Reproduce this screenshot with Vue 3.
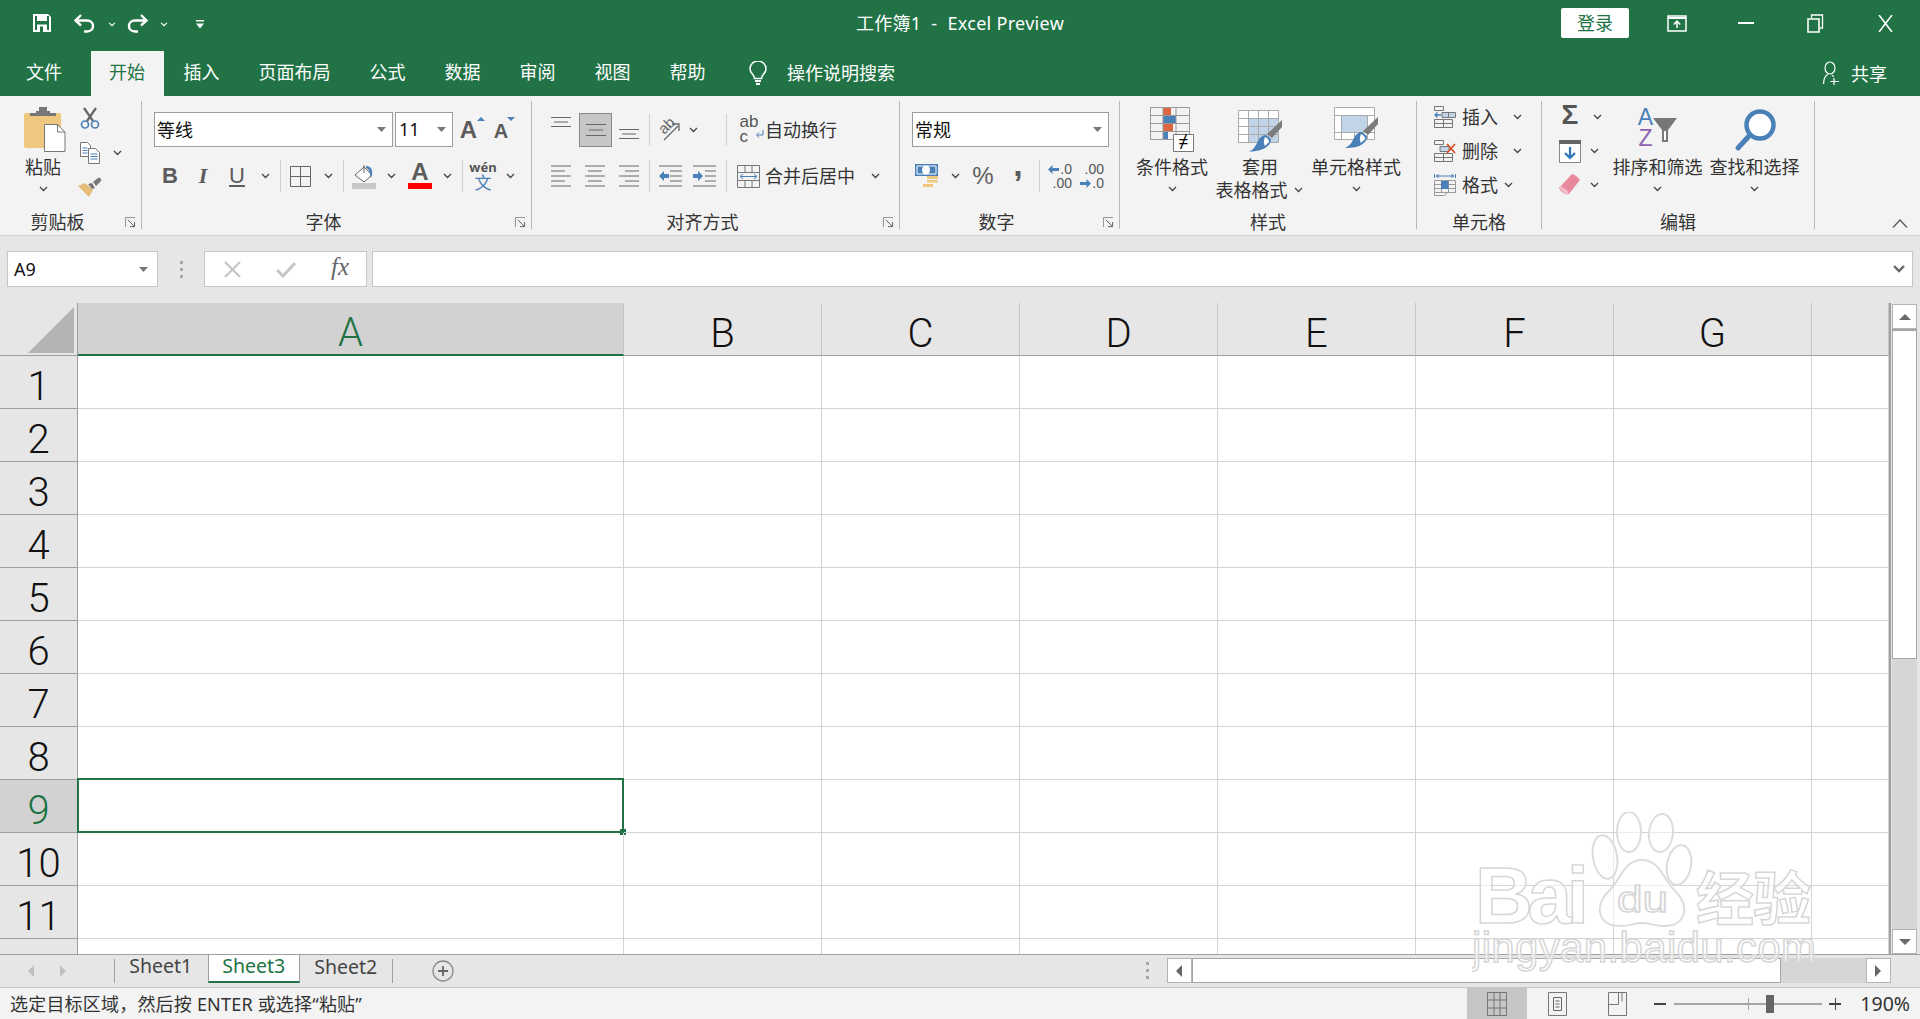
<template>
  <div class="excel">
    <!-- 图标 sprite -->
    <svg class="sprite" aria-hidden="true">
      <symbol id="chev" viewBox="0 0 9 6"><path d="M1 1l3.5 3.5L8 1" fill="none" stroke="#444" stroke-width="1.3" /></symbol>
      <symbol id="launcher" viewBox="0 0 12 12">
        <path d="M.5 11V.5H11" fill="none" stroke="#8a8a8a" />
        <path d="M3 3l7 7M10.5 5.5v5h-5" fill="none" stroke="#555" />
      </symbol>
      <symbol id="drop" viewBox="0 0 9 5"><path d="M0 0h9L4.500 5z" fill="#777" /></symbol>
    </svg>

    <!-- 标题栏 -->
    <header class="titlebar">
      <div class="qat">
        <svg class="i-save" width="20" height="20" viewBox="0 0 20 20">
          <path d="M1 1h15l3 3v15H1z" fill="#fff" />
          <path d="M3 3h14v14H3z" fill="#217346" />
          <path d="M5 1h10v7H5z" fill="#fff" />
          <path d="M5 11.500h10V19H5z" fill="#fff" />
          <path d="M8 13.500h3V19H8z" fill="#217346" />
        </svg>
        <svg class="i-undo" width="24" height="20" viewBox="0 0 24 20">
          <path d="M8 2L2.500 7.500 8 12.500M3 7.500h11c8 0 8 11 0 11h-3" fill="none" stroke="#fff" stroke-width="2.400" />
        </svg>
        <svg class="tb-chev" width="8" height="5"><use href="#chev" class="white" /></svg>
        <svg class="i-redo" width="24" height="20" viewBox="0 0 24 20">
          <path d="M16 2l5.500 5.500L16 12.500M21 7.500H10c-8 0-8 11 0 11h3" fill="none" stroke="#fff" stroke-width="2.400" />
        </svg>
        <svg class="tb-chev" width="8" height="5"><use href="#chev" /></svg>
        <svg class="i-more" width="8" height="9" viewBox="0 0 8 9"><path d="M0 0h8v1.500H0zM0 3.500h8L4 8.500z" fill="#fff" /></svg>
      </div>
      <div class="doc-title">工作簿1 &nbsp;-&nbsp; Excel Preview</div>
      <div class="win-ctl">
        <button class="login">登录</button>
        <span class="ctl">
          <svg width="20" height="17" viewBox="0 0 20 17">
            <path d="M1 1h18v15H1z" fill="none" stroke="#fff" stroke-width="1.500" />
            <path d="M1 3h18" stroke="#fff" stroke-width="2" />
            <path d="M10 13V6.500M6.800 9.500L10 6.200l3.200 3.300" fill="none" stroke="#fff" stroke-width="1.500" />
          </svg>
        </span>
        <span class="ctl"><svg width="16" height="2"><path d="M0 1h16" stroke="#fff" stroke-width="2" /></svg></span>
        <span class="ctl">
          <svg width="17" height="19" viewBox="0 0 17 19">
            <path d="M1 5h11v13H1z" fill="none" stroke="#fff" stroke-width="1.600" />
            <path d="M4.500 4V1h11v13H13" fill="none" stroke="#fff" stroke-width="1.300" />
          </svg>
        </span>
        <span class="ctl"><svg width="15" height="17" viewBox="0 0 15 17"><path d="M1 0l13 17M14 0L1 17" stroke="#fff" stroke-width="1.600" /></svg></span>
      </div>
    </header>

    <!-- 选项卡 -->
    <nav class="tabs">
      <span v-for="tab in ribbonTabs" :key="tab" class="tab" :class="{ active: tab === '开始', file: tab === '文件' }">{{ tab }}</span>
      <svg class="bulb" width="18" height="25" viewBox="0 0 18 25">
        <path d="M5.500 17.500c0-4-4.500-5-4.500-9.500a8 8 0 0 1 16 0c0 4.500-4.500 5.500-4.500 9.500z" fill="none" stroke="#fff" stroke-width="1.500" />
        <path d="M6 20h6M7 23h4" stroke="#fff" stroke-width="2" />
      </svg>
      <span class="tell">操作说明搜索</span>
      <span class="share">
        <svg width="16" height="24" viewBox="0 0 16 24">
          <ellipse cx="7" cy="7" rx="5" ry="6" fill="none" stroke="#fff" stroke-width="1.200" />
          <path d="M.6 23c0-5 1.500-8 4-9.500M9 14.500l2 1M11 17v7M7.500 20.500H16" fill="none" stroke="#fff" stroke-width="1.200" />
        </svg>
        <span>共享</span>
      </span>
    </nav>

    <!-- 功能区 -->
    <section class="ribbon">
      <!-- 剪贴板 -->
      <div class="group g-clip has-launcher">
        <div class="body">
          <div class="big paste">
            <svg class="paste-icon" width="42" height="45" viewBox="0 0 42 45">
              <path d="M2 6h34a2 2 0 0 1 1 2v33H2a2 2 0 0 1-2-2V8a2 2 0 0 1 2-2z" fill="#edc87e" />
              <path d="M6 6h6V4h3V0h8v4h3v2h6v3H6z" fill="#777" />
              <path d="M20.500 17.500h13l7.500 7.500v19.500H20.500z" fill="#fff" stroke="#777" />
              <path d="M33.500 17.500V25H41" fill="none" stroke="#777" />
            </svg>
            <span class="big-text">粘贴</span>
            <svg class="chev" width="9" height="6"><use href="#chev" /></svg>
          </div>
          <div class="stack clip-stack">
            <div class="row-item">
              <svg class="clip-icon" width="20" height="22" viewBox="0 0 20 22">
                <path d="M4 1l9 13M16 1L7 14" stroke="#666" stroke-width="2.200" />
                <circle cx="5" cy="17.500" r="3.500" fill="none" stroke="#4a80b8" stroke-width="1.700" />
                <circle cx="15" cy="17.500" r="3.500" fill="none" stroke="#4a80b8" stroke-width="1.700" />
              </svg>
            </div>
            <div class="row-item">
              <svg class="clip-icon" width="20" height="22" viewBox="0 0 20 22">
                <path d="M.5.500h7l3 3v11H.5z" fill="#fff" stroke="#777" />
                <path d="M2.500 6h5M2.500 8.500h5M2.500 11h5" stroke="#4a80b8" />
                <path d="M8.500 6.500h7l4 4v11h-11z" fill="#fff" stroke="#777" />
                <path d="M10.500 12h7M10.500 14.500h7M10.500 17h7" stroke="#4a80b8" />
              </svg>
              <svg class="copy-chev" width="9" height="6"><use href="#chev" /></svg>
            </div>
            <div class="row-item">
              <svg class="clip-icon" width="24" height="21" viewBox="0 0 24 21">
                <path d="M0 9l7-3 8 7-4 7z" fill="#e5bd7a" />
                <path d="M10 7l4 5 3-1-3-5zM15 5l3 4 5-5c1-2-1-4-3-3z" fill="#777" />
              </svg>
            </div>
          </div>
        </div>
        <div class="group-label">剪贴板</div>
        <svg class="launcher" width="11" height="11"><use href="#launcher" /></svg>
      </div>

      <!-- 字体 -->
      <div class="group g-font has-launcher">
        <div class="body tworow">
          <div class="rb-row top">
            <div class="combo font-name"><span>等线</span><svg width="9" height="5"><use href="#drop" /></svg></div>
            <div class="combo font-size"><span>11</span><svg width="9" height="5"><use href="#drop" /></svg></div>
            <span class="slot grow"><b class="a-big">A</b><i class="tri up"></i></span>
            <span class="slot shrink"><b class="a-small">A</b><i class="tri down"></i></span>
          </div>
          <div class="rb-row bottom">
            <span class="slot w32 fmt bold">B</span>
            <span class="slot w34 fmt ital">I</span>
            <span class="slot w34 fmt under">U</span>
            <span class="slot w22"><svg width="9" height="6"><use href="#chev" /></svg></span>
            <i class="vsep m4"></i>
            <span class="slot w38">
              <svg width="21" height="21" viewBox="0 0 21 21"><path d="M.5.500h20v20H.5zM10.500.500v20M.5 10.500h20" fill="none" stroke="#666" /></svg>
            </span>
            <span class="slot w18"><svg width="9" height="6"><use href="#chev" /></svg></span>
            <i class="vsep m6"></i>
            <span class="slot w40">
              <svg width="24" height="25" viewBox="0 0 24 25">
                <path d="M3 11l9-8 8 8-8 7z" fill="#fff" stroke="#666" />
                <path d="M12 1v8" stroke="#666" />
                <path d="M14 2c5 0 7 4 6 9l-1 3-1-3c0-3-1-6-4-7z" fill="#4a80b8" />
                <path d="M0 19h24v6H0z" fill="#c9c9c9" />
              </svg>
            </span>
            <span class="slot w14"><svg width="9" height="6"><use href="#chev" /></svg></span>
            <span class="slot w44 color-a"><b>A</b><i></i></span>
            <span class="slot w10"><svg width="9" height="6"><use href="#chev" /></svg></span>
            <i class="vsep m10"></i>
            <span class="slot w40 wen"><small>wén</small><em>文</em></span>
            <span class="slot w14"><svg width="9" height="6"><use href="#chev" /></svg></span>
          </div>
        </div>
        <div class="group-label">字体</div>
        <svg class="launcher" width="11" height="11"><use href="#launcher" /></svg>
      </div>

      <!-- 对齐方式 -->
      <div class="group g-align has-launcher">
        <div class="body tworow">
          <div class="rb-row top">
            <span class="slot w34 al-top"><svg width="20" height="10" viewBox="0 0 20 10"><path d="M0 .5h20M3 5h14M0 9.500h20" stroke="#666" /></svg></span>
            <span class="slot mid-on"><svg width="20" height="12" viewBox="0 0 20 12"><path d="M0 .5h20M3 6h14M0 11.500h20" stroke="#666" /></svg></span>
            <span class="slot w34 al-bot"><svg width="20" height="10" viewBox="0 0 20 10"><path d="M0 .5h20M3 5h14M0 9.500h20" stroke="#666" /></svg></span>
            <i class="vsep m3"></i>
            <span class="slot w40">
              <svg class="orient" width="22" height="24" viewBox="0 0 22 24">
                <text x="1" y="13" transform="rotate(-45 8 10)">ab</text>
                <path d="M5 22L19 8M13 6h7v7" fill="none" stroke="#666" stroke-width="1.300" />
              </svg>
            </span>
            <span class="slot w6"><svg width="9" height="6"><use href="#chev" /></svg></span>
            <i class="vsep m30"></i>
            <span class="slot w34 m5 ab-wrap"><span class="ab">ab<br />c</span>
              <svg class="ab-arrow" width="8" height="8" viewBox="0 0 8 8"><path d="M7 0v5H1M3 2.500L.5 5 3 7.500" fill="none" stroke="#4a80b8" /></svg>
            </span>
            <span class="txt">自动换行</span>
          </div>
          <div class="rb-row bottom">
            <span class="slot w34 m12"><svg width="20" height="22" viewBox="0 0 20 22"><path d="M0 1h20M0 6h14M0 11h20M0 16h14M0 21h20" stroke="#666" /></svg></span>
            <span class="slot w34"><svg width="20" height="22" viewBox="0 0 20 22"><path d="M0 1h20M3 6h14M0 11h20M3 16h14M0 21h20" stroke="#666" /></svg></span>
            <span class="slot w34"><svg width="20" height="22" viewBox="0 0 20 22"><path d="M0 1h20M6 6h14M0 11h20M6 16h14M0 21h20" stroke="#666" /></svg></span>
            <i class="vsep m3"></i>
            <span class="slot w40">
              <svg width="23" height="22" viewBox="0 0 23 22">
                <path d="M0 1h23M11 6h12M11 11h12M11 16h12M0 21h23" stroke="#666" />
                <path d="M0 11l5-5v3h5v4H5v3z" fill="#4a80b8" />
              </svg>
            </span>
            <span class="slot w28">
              <svg width="23" height="22" viewBox="0 0 23 22">
                <path d="M0 1h23M12 6h11M12 11h11M12 16h11M0 21h23" stroke="#666" />
                <path d="M10 11L5 6v3H0v4h5v3z" fill="#4a80b8" />
              </svg>
            </span>
            <i class="vsep m8"></i>
            <span class="slot w34 m4">
              <svg width="23" height="23" viewBox="0 0 23 23">
                <path d="M.5.500h22v22H.5zM.5 7.500h22M.5 15.500h22M8 .500v7M15 .500v7M8 15.500v7M15 15.500v7" fill="none" stroke="#777" />
                <path d="M3 11.500h17M6 9l-3 2.500L6 14M17 9l3 2.500-3 2.500" fill="none" stroke="#4a80b8" />
              </svg>
            </span>
            <span class="txt">合并后居中</span>
            <span class="slot w20 m10"><svg width="9" height="6"><use href="#chev" /></svg></span>
          </div>
        </div>
        <div class="group-label">对齐方式</div>
        <svg class="launcher" width="11" height="11"><use href="#launcher" /></svg>
      </div>

      <!-- 数字 -->
      <div class="group g-num has-launcher">
        <div class="body tworow">
          <div class="rb-row top">
            <div class="combo num-fmt"><span>常规</span><svg width="9" height="5"><use href="#drop" /></svg></div>
          </div>
          <div class="rb-row bottom">
            <span class="slot w30">
              <svg width="24" height="24" viewBox="0 0 24 24">
                <path d="M0 0h23v12H0z" fill="#4a80b8" />
                <path d="M2 2h19v8H2z" fill="none" stroke="#fff" />
                <ellipse cx="11" cy="6" rx="4" ry="4.500" fill="#fff" />
                <path d="M12 12h11v3H12zM12 16h11v2.500H12zM8 20h10v3H8z" fill="#edc87e" />
              </svg>
            </span>
            <span class="slot w26"><svg width="9" height="6"><use href="#chev" /></svg></span>
            <span class="slot w30 glyph pct">%</span>
            <span class="slot w40 glyph comma">,</span>
            <i class="vsep m1"></i>
            <span class="slot w40 dec">
              <span class="dec-line"><svg width="11" height="9" viewBox="0 0 11 9"><path d="M0 4.500L4.500 0v3H11v3H4.500v3z" fill="#4a80b8" /></svg>.0</span>
              <span>.00</span>
            </span>
            <span class="slot w26 dec">
              <span>.00</span>
              <span class="dec-line"><svg width="11" height="9" viewBox="0 0 11 9"><path d="M11 4.500L6.500 0v3H0v3h6.500v3z" fill="#4a80b8" /></svg>.0</span>
            </span>
          </div>
        </div>
        <div class="group-label">数字</div>
        <svg class="launcher" width="11" height="11"><use href="#launcher" /></svg>
      </div>

      <!-- 样式 -->
      <div class="group g-style">
        <div class="body">
          <div class="big cf">
            <svg width="44" height="45" viewBox="0 0 44 45">
              <path d="M13 0h8v8h-8zM13 16h10v8H13z" fill="#dd6540" />
              <path d="M13 8h13v8H13zM13 24h5v8h-5z" fill="#4a80b8" />
              <path d="M.5.500h39v32H.5zM.5 8.500h39M.5 16.500h39M.5 24.500h39M13 .500v32M26 .500v32" fill="none" stroke="#999" />
              <path d="M23.500 27.500h20v17h-20z" fill="#fff" stroke="#777" />
              <text class="ne" x="33.500" y="41" text-anchor="middle">≠</text>
            </svg>
            <span class="big-text">条件格式</span>
            <svg class="chev" width="9" height="6"><use href="#chev" /></svg>
          </div>
          <div class="big tblfmt">
            <svg width="44" height="45" viewBox="0 0 44 45">
              <g transform="translate(0 3)">
                <path d="M.5.500h40v32H.5z" fill="#fff" />
                <path d="M10 8h30v24H10z" fill="#c1d4e8" />
                <path d="M.5.500h40v32H.5zM.5 8.500h40M.5 16.500h40M.5 24.500h40M10.500.500v32M20.500.500v32M30.500.500v32" fill="none" stroke="#aaa" />
                <path d="M44 10v7L34 28l-5-4z" fill="#7c7c7c" />
                <path d="M28 25l5 4c0 5-3 7-6 9-3 2-8 3-16 4 4-2 6-5 8-9 2-5 5-8 9-8z" fill="#4a80b8" />
                <path d="M27 27c3 1 4 3 4 5l-4 4c-1-2-2-4 0-9z" fill="#fff" />
              </g>
            </svg>
            <span class="big-text two">套用</span>
            <span class="big-text second">表格格式<svg width="9" height="6"><use href="#chev" /></svg></span>
          </div>
          <div class="big cellsty">
            <svg width="44" height="45" viewBox="0 0 44 45">
              <path d="M.5.500h40v32H.5z" fill="#fff" />
              <path d="M7 8h27v18H7z" fill="#c1d4e8" />
              <path d="M.5.500h40v32H.5zM.5 8.500h40M.5 25.500h40M7.500 8.500v24M33.500 8.500v24M20.500 25.500v7" fill="none" stroke="#aaa" />
              <path d="M44 10v7L34 28l-5-4z" fill="#7c7c7c" />
              <path d="M28 25l5 4c0 5-3 7-6 9-3 2-8 3-16 3 4-2 6-4 8-8 2-5 5-8 9-8z" fill="#4a80b8" />
              <path d="M27 27c3 1 4 3 4 5l-4 4c-1-2-2-4 0-9z" fill="#fff" />
            </svg>
            <span class="big-text">单元格样式</span>
            <svg class="chev" width="9" height="6"><use href="#chev" /></svg>
          </div>
        </div>
        <div class="group-label">样式</div>
      </div>

      <!-- 单元格 -->
      <div class="group g-cells">
        <div class="body">
          <div class="stack cells-stack">
            <div class="row-item">
              <svg width="22" height="22" viewBox="0 0 22 22">
                <path d="M.5.500h9v4h-9zM.5 13.500h18v8H.5zM9.500 13.500v8M.5 17.500h18" fill="none" stroke="#777" />
                <path d="M8 6.500h13.500v5H8zM14.500 6.500v5" fill="#c1d4e8" stroke="#777" />
                <path d="M1 9h6M3.500 6.500L1 9l2.500 2.500" fill="none" stroke="#4a80b8" stroke-width="1.300" />
              </svg>
              <span class="txt">插入</span>
              <svg class="cell-chev" width="9" height="6"><use href="#chev" /></svg>
            </div>
            <div class="row-item">
              <svg width="22" height="22" viewBox="0 0 22 22">
                <path d="M.5.500h9v4h-9zM.5 13.500h18v8H.5zM9.500 13.500v8M.5 17.500h18" fill="none" stroke="#777" />
                <path d="M6 6.500h9v5H6z" fill="#c1d4e8" stroke="#777" />
                <path d="M13 4l8 9M21 4l-8 9" stroke="#d9502e" stroke-width="1.800" />
              </svg>
              <span class="txt">删除</span>
              <svg class="cell-chev" width="9" height="6"><use href="#chev" /></svg>
            </div>
            <div class="row-item">
              <svg width="22" height="22" viewBox="0 0 22 22">
                <path d="M.5 6.500h21v12h-21zM.5 10.500h21M.5 14.500h21M7.500 6.500v12M14.500 6.500v12M.5 18.500v3h10l3-3" fill="none" stroke="#999" />
                <path d="M7 7h7.500v8H7z" fill="#4a80b8" />
                <path d="M.5 0v4M21.500 0v4M2 2h18M5 .500L2 2l3 1.500M17 .500L20 2l-3 1.500" fill="none" stroke="#4a80b8" />
              </svg>
              <span class="txt">格式</span>
              <svg class="fmt-chev" width="9" height="6"><use href="#chev" /></svg>
            </div>
          </div>
        </div>
        <div class="group-label">单元格</div>
      </div>

      <!-- 编辑 -->
      <div class="group g-edit">
        <div class="body">
          <div class="stack edit-stack">
            <div class="row-item">
              <span class="sigma">Σ</span>
              <svg class="sigma-chev" width="9" height="6"><use href="#chev" /></svg>
            </div>
            <div class="row-item">
              <svg class="edit-icon" width="22" height="23" viewBox="0 0 22 23">
                <path d="M.5.500h21v22H.5z" fill="#fff" stroke="#888" />
                <path d="M0 0h22v4H0z" fill="#666" />
                <path d="M11 7v11M6 13l5 5 5-5" fill="none" stroke="#2e75b6" stroke-width="2.200" />
              </svg>
              <svg class="edit-chev" width="9" height="6"><use href="#chev" /></svg>
            </div>
            <div class="row-item">
              <svg class="edit-icon" width="22" height="22" viewBox="0 0 22 22">
                <path d="M13 0c2 0 7 4 8 6L10 20H6c-2-1-5-3-6-6z" fill="#e98a9c" />
                <path d="M0 14l2-2 8 6-3 3z" fill="#f3bcc6" />
              </svg>
              <svg class="edit-chev" width="9" height="6"><use href="#chev" /></svg>
            </div>
          </div>
          <div class="big sortb">
            <div class="sort-icon">
              <span class="az"><span class="a">A</span><span class="z">Z</span></span>
              <svg width="24" height="24" viewBox="0 0 24 24">
                <path d="M0 0h24L15 12v12H9V12z" fill="#777" />
                <path d="M11 13v9h2v-9z" fill="#fff" />
              </svg>
            </div>
            <span class="big-text">排序和筛选</span>
            <svg class="chev" width="9" height="6"><use href="#chev" /></svg>
          </div>
          <div class="big findb">
            <svg width="42" height="45" viewBox="0 0 42 45">
              <circle cx="26" cy="18" r="13.500" fill="#fff" stroke="#4a80b8" stroke-width="4.500" />
              <path d="M16 28L4 41" stroke="#4a80b8" stroke-width="5" stroke-linecap="round" />
            </svg>
            <span class="big-text">查找和选择</span>
            <svg class="chev" width="9" height="6"><use href="#chev" /></svg>
          </div>
        </div>
        <div class="group-label">编辑</div>
      </div>

      <div class="ribbon-end">
        <svg width="16" height="9" viewBox="0 0 16 9"><path d="M1 8.500L8 1l7 7.500" fill="none" stroke="#555" stroke-width="1.200" /></svg>
      </div>
    </section>

    <!-- 编辑栏 -->
    <section class="formula">
      <div class="namebox"><span>A9</span><svg width="9" height="5"><use href="#drop" /></svg></div>
      <span class="grip"><i></i><i></i><i></i></span>
      <div class="fx-btns">
        <svg width="17" height="17" viewBox="0 0 17 17"><path d="M1 1l15 15M16 1L1 16" stroke="#c6c6c6" stroke-width="2.200" /></svg>
        <svg width="20" height="17" viewBox="0 0 20 17"><path d="M1 9l6 6L19 2" fill="none" stroke="#c6c6c6" stroke-width="3" /></svg>
        <span class="fx">fx</span>
      </div>
      <div class="formula-input">
        <svg width="12" height="8" viewBox="0 0 12 8"><path d="M1 1l5 5 5-5" fill="none" stroke="#666" stroke-width="2.400" /></svg>
      </div>
    </section>

    <!-- 工作表 -->
    <section class="sheet">
      <div class="grid">
        <div class="corner"><svg width="46" height="46" viewBox="0 0 46 46"><path d="M46 0v46H0z" fill="#b4b4b4" /></svg></div>
        <div v-for="col in columns" :key="col" class="col-head" :class="{ on: col === 'A' }">{{ col }}</div>
        <template v-for="row in rows" :key="row">
          <div class="row-head" :class="{ on: row === 9, tail: row === 12 }">{{ row === 12 ? '' : row }}</div>
          <div v-for="col in columns" :key="col + row" class="cell" :class="{ tail: row === 12 }">
            <div v-if="col === 'A' && row === 9" class="selection"><i></i></div>
          </div>
        </template>
      </div>
      <div class="vscroll">
        <div class="sb-btn up"><i></i></div>
        <div class="sb-thumb"></div>
        <div class="sb-track"></div>
        <div class="sb-btn down"><i></i></div>
      </div>
    </section>

    <!-- 工作表标签 -->
    <section class="sheetbar">
      <div class="sheet-nav"><i class="nav-l"></i><i class="nav-r"></i></div>
      <div class="sheet-tabs">
        <span v-for="s in sheets" :key="s" class="sheet-tab" :class="{ active: s === 'Sheet3' }">{{ s }}</span>
      </div>
      <span class="add-sheet">
        <svg width="22" height="22" viewBox="0 0 22 22">
          <circle cx="11" cy="11" r="10" fill="none" stroke="#8a8a8a" stroke-width="1.300" />
          <path d="M11 6v10M6 11h10" stroke="#666" stroke-width="1.800" />
        </svg>
      </span>
      <span class="grip h"><i></i><i></i><i></i></span>
      <div class="hscroll">
        <div class="hs-btn"><i class="nav-l dark"></i></div>
        <div class="hs-thumb"></div>
        <div class="hs-track"></div>
        <div class="hs-btn"><i class="nav-r dark"></i></div>
      </div>
    </section>

    <!-- 状态栏 -->
    <footer class="status">
      <span class="status-text">选定目标区域，然后按 ENTER 或选择“粘贴”</span>
      <div class="status-right">
        <span class="view on">
          <svg width="20" height="24" viewBox="0 0 20 24"><path d="M.5.500h19v23H.5zM.5 8h19M.5 16h19M7 .500v23M13 .500v23" fill="none" stroke="#777" /></svg>
        </span>
        <span class="view">
          <svg width="19" height="24" viewBox="0 0 19 24"><path d="M.5.500h18v23H.5z" fill="none" stroke="#777" /><path d="M5.500 5.500h8v13h-8zM7.500 9h4M7.500 12h4M7.500 15h4" fill="none" stroke="#666" /></svg>
        </span>
        <span class="view">
          <svg width="19" height="24" viewBox="0 0 19 24"><path d="M.5.500h18v23H.5zM.5 12.500h10V.500M14 .500v9" fill="none" stroke="#777" /></svg>
        </span>
        <span class="zoom-btn minus"></span>
        <div class="slider"><i class="tick"></i><i class="thumb"></i></div>
        <span class="zoom-btn plus"></span>
        <span class="pct-text">190%</span>
      </div>
    </footer>

    <!-- 水印 -->
    <svg class="watermark" width="360" height="170" viewBox="0 0 360 170">
      <g class="wm-paw">
        <ellipse cx="133" cy="45" rx="12" ry="22" transform="rotate(-10 133 45)" />
        <ellipse cx="157" cy="20" rx="12" ry="20" />
        <ellipse cx="189" cy="21" rx="12" ry="19" transform="rotate(6 189 21)" />
        <ellipse cx="207" cy="53" rx="12" ry="20" transform="rotate(10 207 53)" />
        <path d="M170 48c18 0 20 18 34 32 14 14 10 34-12 34-10 0-14-3-22-3-8 0-12 3-22 3-22 0-26-20-12-34 14-14 16-32 34-32z" />
      </g>
      <text class="wm-big" x="3" y="111" textLength="114">Bai</text>
      <text class="wm-du" x="145" y="100" textLength="51" lengthAdjust="spacingAndGlyphs">du</text>
      <text class="wm-cn" x="224" y="108" textLength="115">经验</text>
      <text class="wm-url" x="0" y="150" textLength="344">jingyan.baidu.com</text>
    </svg>
  </div>
</template>

<script setup>
const ribbonTabs = ['文件', '开始', '插入', '页面布局', '公式', '数据', '审阅', '视图', '帮助']
const columns = ['A', 'B', 'C', 'D', 'E', 'F', 'G', '']
const rows = [1, 2, 3, 4, 5, 6, 7, 8, 9, 10, 11, 12]
const sheets = ['Sheet1', 'Sheet3', 'Sheet2']
</script>

<style scoped>
.excel {
  position: relative;
  width: 1920px;
  height: 1019px;
  overflow: hidden;
  display: flex;
  flex-direction: column;
  font-family: "Noto Sans", "Noto Sans CJK SC", sans-serif;
  font-size: 18px;
  color: #333;
  background: #e6e6e6;
}

.sprite {
  position: absolute;
  width: 0;
  height: 0;
}

svg {
  display: block;
  flex: none;
}

/* 标题栏 */
.titlebar {
  height: 50px;
  flex: none;
  display: grid;
  grid-template-columns: 1fr auto 1fr;
  align-items: center;
  padding-bottom: 4px;
  box-sizing: border-box;
  background: #217346;
  color: #fff;
}

.qat {
  display: flex;
  align-items: center;
  padding-left: 32px;
}

.i-undo {
  margin-left: 21px;
}

.tb-chev {
  margin: 2px 0 0 11px;
  filter: brightness(0) invert(1);
}

.i-redo {
  margin-left: 9px;
}

.i-more {
  margin-left: 28px;
  margin-top: 3px;
}

.doc-title {
  line-height: 24px;
  white-space: nowrap;
  font-size: 18px;
  letter-spacing: 0.3px;
}

.win-ctl {
  display: flex;
  align-items: center;
  justify-content: flex-end;
}

.login {
  width: 68px;
  height: 30px;
  margin-right: 13px;
  border: 0;
  border-radius: 2px;
  background: #fff;
  color: #217346;
  font: inherit;
  line-height: 30px;
  padding: 0;
}

.ctl {
  width: 69.500px;
  display: flex;
  justify-content: center;
}

/* 选项卡 */
.tabs {
  height: 46px;
  flex: none;
  display: flex;
  align-items: stretch;
  background: #217346;
  color: #fff;
}

.tab {
  display: flex;
  align-items: center;
  padding: 0 19.500px 2px;
  white-space: nowrap;
  line-height: 24px;
}

.tab.file {
  margin: 0 9.500px 0 6.500px;
}

.tab.active {
  margin-top: 1px;
  padding: 0 19px 3px 18px;
  background: #f3f3f3;
  color: #217346;
}

.bulb {
  align-self: center;
  margin-left: 24px;
}

.tell {
  align-self: center;
  margin-left: 20px;
  margin-bottom: 2px;
}

.share {
  margin-left: auto;
  margin-right: 33px;
  display: flex;
  align-items: center;
  gap: 12px;
}

/* 功能区 */
.ribbon {
  height: 140px;
  flex: none;
  display: flex;
  box-sizing: border-box;
  padding-top: 5px;
  background: #f3f3f3;
  border-bottom: 1px solid #d4d4d4;
}

.group {
  position: relative;
  flex: none;
  height: 128px;
  box-sizing: border-box;
  display: flex;
  flex-direction: column;
  border-right: 1px solid #b8b8b8;
}

.g-clip { width: 142px; }
.g-font { width: 390px; }
.g-align { width: 368px; }
.g-num { width: 220px; }
.g-style { width: 297px; }
.g-cells { width: 125px; }
.g-edit { width: 273px; }

.body {
  flex: 1;
  display: flex;
  min-height: 0;
}

.group-label {
  height: 18px;
  line-height: 18px;
  margin-bottom: -2px;
  text-align: center;
  white-space: nowrap;
}

.has-launcher .group-label {
  padding-right: 26px;
}

.launcher {
  position: absolute;
  right: 5px;
  bottom: 1px;
}

.big {
  flex: none;
  display: flex;
  flex-direction: column;
  align-items: center;
  padding-top: 6px;
  white-space: nowrap;
}

.big > svg:first-child,
.sort-icon {
  height: 45px;
}

.big-text {
  display: flex;
  align-items: center;
  height: 18px;
  line-height: 18px;
  margin-top: 6px;
}

.big .chev {
  margin-top: 10px;
}

.big-text.second {
  margin-top: 5px;
  position: relative;
  left: -1px;
  gap: 6px;
}

.paste {
  width: 50px;
  margin-left: 18px;
}

.paste-icon {
  position: relative;
  left: 2px;
}

.stack {
  display: flex;
  flex-direction: column;
  margin-top: -1px;
}

.row-item {
  display: flex;
  align-items: center;
  height: 34px;
}

.clip-stack {
  margin-left: 10px;
}

.clip-stack .row-item {
  height: 35px;
}

.clip-icon {
  width: 24px;
}

.copy-chev {
  margin-left: 11px;
}

.tworow {
  flex-direction: column;
}

.rb-row {
  display: flex;
  align-items: center;
}

.rb-row.top {
  margin-top: 11px;
  height: 35px;
}

.rb-row.bottom {
  margin-top: 13px;
  height: 32px;
}

.g-font .rb-row,
.g-num .rb-row {
  padding-left: 12px;
}

.slot {
  flex: none;
  display: flex;
  align-items: center;
  justify-content: center;
  height: 100%;
}

.w6 { width: 6px; }
.w10 { width: 10px; }
.w14 { width: 14px; }
.w18 { width: 18px; }
.w20 { width: 20px; }
.w22 { width: 22px; }
.w26 { width: 26px; }
.w28 { width: 28px; }
.w30 { width: 30px; }
.w32 { width: 32px; }
.w34 { width: 34px; }
.w38 { width: 38px; }
.w40 { width: 40px; }
.w44 { width: 44px; }
.m1 { margin-left: 1px; }
.m3 { margin-left: 3px; }
.m4 { margin-left: 4px; }
.m5 { margin-left: 5px; }
.m6 { margin-left: 6px; }
.m8 { margin-left: 8px; }
.m10 { margin-left: 10px; }
.m12 { margin-left: 12px; }
.m30 { margin-left: 30px; }

.vsep {
  flex: none;
  width: 1px;
  height: 32px;
  background: #d0d0d0;
}

.combo {
  box-sizing: border-box;
  height: 35px;
  display: flex;
  align-items: center;
  justify-content: space-between;
  padding: 0 6px 0 2px;
  background: #fff;
  border: 1px solid #9c9c9c;
  color: #111;
}

.combo span {
  margin-top: -2px;
}

.font-name {
  width: 239px;
}

.font-size {
  width: 58px;
  margin-left: 2px;
  padding-left: 3px;
  font-family: "Noto Sans", sans-serif;
}

.num-fmt {
  width: 197px;
}

.grow {
  width: 34px;
  position: relative;
}

.shrink {
  width: 30px;
  position: relative;
}

.a-big,
.a-small {
  font-family: "Liberation Sans", sans-serif;
  font-weight: 700;
  color: #5c5c5c;
}

.a-big {
  font-size: 24px;
  margin-right: 3px;
}

.a-small {
  font-size: 20px;
  margin-top: 3px;
  margin-right: 2px;
}

.tri {
  position: absolute;
  top: 5px;
  right: 2px;
  width: 0;
  height: 0;
  border-left: 4px solid transparent;
  border-right: 4px solid transparent;
}

.tri.up {
  border-bottom: 4px solid #4a80b8;
}

.tri.down {
  border-top: 4px solid #4a80b8;
}

.fmt {
  font-family: "Liberation Sans", sans-serif;
  font-size: 22px;
  color: #5c5c5c;
}

.bold {
  font-weight: 700;
}

.ital {
  font-style: italic;
  font-family: "Liberation Serif", serif;
  font-weight: 700;
}

.under {
  text-decoration: underline;
  text-underline-offset: 2px;
}

.color-a {
  position: relative;
}

.color-a b {
  font-family: "Liberation Sans", sans-serif;
  font-size: 24px;
  color: #5c5c5c;
  margin-top: -8px;
}

.color-a i {
  position: absolute;
  left: 10px;
  bottom: 3px;
  width: 24px;
  height: 6px;
  background: #ff0000;
}

.wen {
  flex-direction: column;
}

.wen small {
  font-size: 13px;
  line-height: 14px;
  font-weight: 700;
  color: #555;
  font-family: "Noto Sans", sans-serif;
}

.wen em {
  font-style: normal;
  font-size: 17px;
  line-height: 18px;
  color: #4a80b8;
}

.mid-on {
  box-sizing: border-box;
  width: 33px;
  height: 34px;
  margin-left: 1px;
  background: #c6c6c6;
  border: 1px solid #8a8a8a;
}

.g-align .top .al-top {
  margin-left: 12px;
  align-items: flex-start;
  padding-top: 5px;
  box-sizing: border-box;
}

.al-bot {
  align-items: flex-end;
  padding-bottom: 8px;
  box-sizing: border-box;
}

.orient {
  overflow: visible;
}

.orient text {
  font-size: 15px;
  fill: #666;
  font-family: "Liberation Sans", sans-serif;
}

.ab-wrap {
  position: relative;
}

.ab {
  font-size: 17px;
  line-height: 15px;
  color: #555;
  font-family: "Liberation Sans", sans-serif;
  padding-bottom: 2px;
}

.ab-arrow {
  position: absolute;
  right: 2px;
  bottom: 9px;
}

.g-align .top .txt {
  margin-left: -1px;
}

.txt {
  white-space: nowrap;
  line-height: 18px;
}

.glyph {
  color: #5c5c5c;
  font-family: "Liberation Sans", sans-serif;
}

.pct {
  font-size: 24px;
}

.comma {
  font-size: 34px;
  font-weight: 700;
  padding-bottom: 24px;
  box-sizing: border-box;
}

.dec {
  flex-direction: column;
  align-items: flex-end;
  padding-right: 5px;
  box-sizing: border-box;
  font-family: "Liberation Sans", sans-serif;
  font-size: 14px;
  line-height: 14px;
  color: #555;
}

.w40.dec {
  padding-right: 8px;
}

.w26.dec {
  padding-right: 2px;
}

.dec-line {
  display: flex;
  align-items: center;
  gap: 1px;
}

.cf {
  width: 86px;
  margin-left: 9px;
}

.tblfmt {
  width: 88px;
  margin-left: 1px;
}

.cellsty {
  width: 104px;
}

.cells-stack {
  padding-left: 17px;
}

.cells-stack .txt {
  margin-left: 6px;
}

.cell-chev {
  margin-left: 15px;
}

.fmt-chev {
  margin-left: 6px;
}

.edit-stack {
  width: 55px;
  margin-left: 13px;
  flex: none;
}

.sigma {
  width: 30px;
  text-align: center;
  font-family: "Liberation Sans", sans-serif;
  font-size: 28px;
  font-weight: 700;
  color: #555;
  line-height: 28px;
  margin-top: -4px;
}

.sigma-chev {
  margin-left: 8px;
}

.edit-icon {
  margin-left: 4px;
}

.edit-chev {
  margin-left: 9px;
}

.sortb,
.findb {
  width: 95px;
}

.findb {
  margin-left: 2px;
}

.sort-icon {
  display: flex;
  align-items: flex-start;
}

.az {
  display: flex;
  flex-direction: column;
  align-items: center;
  font-family: "Liberation Sans", sans-serif;
  font-size: 23px;
  line-height: 21px;
}

.a {
  color: #4a80b8;
}

.z {
  color: #8e63b3;
}

.sort-icon svg {
  margin-top: 11px;
}

.ribbon-end {
  flex: 1;
  height: 128px;
  display: flex;
  align-items: flex-end;
  justify-content: flex-end;
  padding: 0 12px 1px 0;
  box-sizing: border-box;
}

/* 编辑栏 */
.formula {
  height: 67px;
  flex: none;
  box-sizing: border-box;
  display: flex;
  align-items: flex-start;
  padding: 15px 0 0 7px;
  background: #e6e6e6;
}

.namebox {
  box-sizing: border-box;
  width: 151px;
  height: 36px;
  display: flex;
  align-items: center;
  justify-content: space-between;
  padding: 0 9px 0 6px;
  background: #fff;
  border: 1px solid #c6c6c6;
  color: #111;
}

.grip {
  flex: none;
  display: flex;
  flex-direction: column;
  gap: 4px;
  width: 46px;
  align-items: center;
  padding-top: 10px;
}

.grip i {
  width: 3px;
  height: 3px;
  background: #a6a6a6;
}

.fx-btns {
  box-sizing: border-box;
  width: 163px;
  height: 36px;
  display: flex;
  align-items: center;
  padding-left: 19px;
  gap: 35px;
  background: #fff;
  border: 1px solid #c6c6c6;
}

.fx {
  font-family: "Liberation Serif", serif;
  font-style: italic;
  font-size: 25px;
  color: #666;
  line-height: 1;
  margin-top: -5px;
}

.formula-input {
  box-sizing: border-box;
  width: 1541px;
  height: 36px;
  margin-left: 5px;
  display: flex;
  align-items: center;
  justify-content: flex-end;
  padding-right: 7px;
  background: #fff;
  border: 1px solid #c6c6c6;
}

/* 工作表 */
.sheet {
  height: 651px;
  flex: none;
  display: flex;
}

.grid {
  width: 1891px;
  box-sizing: border-box;
  flex: none;
  display: grid;
  grid-template-columns: 78px 546px repeat(6, 198px) 1fr;
  grid-template-rows: 53px repeat(11, 53px) 15px;
  border-right: 2px solid #9f9f9f;
  overflow: hidden;
  background: #fff;
  font-family: Roboto, "Noto Sans", sans-serif;
  font-weight: 300;
}

.corner {
  display: flex;
  justify-content: flex-end;
  align-items: flex-start;
  box-sizing: border-box;
  padding: 4px 3px 0 0;
  background: #e6e6e6;
  border-right: 1px solid #9f9f9f;
  border-bottom: 1px solid #9f9f9f;
}

.col-head,
.row-head {
  display: flex;
  align-items: center;
  justify-content: center;
  box-sizing: border-box;
  background: #e6e6e6;
  color: #111;
  font-size: 40px;
  line-height: 1;
}

.col-head {
  padding-top: 9px;
  border-right: 1px solid #c6c6c6;
  border-bottom: 1px solid #9f9f9f;
}

.col-head.on {
  background: #d2d2d2;
  color: #217346;
  border-bottom: 2px solid #217346;
}

.row-head {
  padding-top: 9px;
  border-right: 1px solid #9f9f9f;
  border-bottom: 1px solid #9f9f9f;
}

.row-head.on {
  background: #d2d2d2;
  color: #217346;
}

.row-head.tail {
  border-bottom: 0;
}

.cell {
  position: relative;
  box-sizing: border-box;
  border-right: 1px solid #d4d4d4;
  border-bottom: 1px solid #d4d4d4;
}

.cell.tail {
  border-bottom: 0;
}

.selection {
  position: absolute;
  left: -1px;
  top: -2px;
  width: 547px;
  height: 55px;
  box-sizing: border-box;
  border: 2px solid #217346;
}

.selection i {
  position: absolute;
  right: -4px;
  bottom: -4px;
  width: 6px;
  height: 6px;
  background: #217346;
}

.vscroll {
  flex: 1;
  display: flex;
  flex-direction: column;
  padding-left: 1px;
  padding-right: 3px;
}

.sb-btn {
  box-sizing: border-box;
  flex: none;
  height: 25px;
  margin-top: 1px;
  background: #fff;
  border: 1px solid #b4b4b4;
  display: flex;
  align-items: center;
  justify-content: center;
}

.sb-btn i {
  width: 0;
  height: 0;
  border-left: 6px solid transparent;
  border-right: 6px solid transparent;
}

.sb-btn.up i {
  border-bottom: 6px solid #6a6a6a;
}

.sb-btn.down i {
  border-top: 6px solid #6a6a6a;
}

.sb-thumb {
  flex: none;
  box-sizing: border-box;
  height: 330px;
  background: #fff;
  border: 1px solid #a6a6a6;
  border-top-width: 2px;
}

.sb-track {
  flex: 1;
  background: #d6d6d6;
}

.sb-btn.down {
  margin-top: 0;
}

/* 工作表标签 */
.sheetbar {
  height: 33px;
  flex: none;
  box-sizing: border-box;
  display: flex;
  align-items: flex-start;
  background: #e6e6e6;
  border-top: 1px solid #9f9f9f;
}

.sheet-nav {
  width: 115px;
  flex: none;
  display: flex;
  align-items: center;
  padding-left: 28px;
  gap: 26px;
  box-sizing: border-box;
  border-right: 1px solid #9f9f9f;
  margin-top: 4px;
  height: 24px;
}

.nav-l,
.nav-r {
  width: 0;
  height: 0;
  border-top: 6px solid transparent;
  border-bottom: 6px solid transparent;
}

.nav-l {
  border-right: 6px solid #c0c0c0;
}

.nav-r {
  border-left: 6px solid #c0c0c0;
}

.nav-l.dark {
  border-right-color: #666;
}

.nav-r.dark {
  border-left-color: #666;
}

.sheet-tabs {
  display: flex;
  flex: none;
}

.sheet-tab {
  box-sizing: border-box;
  width: 92.500px;
  height: 28px;
  text-align: center;
  font-size: 19.500px;
  line-height: 22px;
  color: #444;
  border-right: 1px solid transparent;
}

.sheet-tab.active {
  background: #fff;
  color: #217346;
  border-left: 1px solid #9f9f9f;
  border-right: 1px solid #9f9f9f;
  border-bottom: 2px solid #217346;
}

.sheet-tab:last-child {
  height: 24px;
  margin-top: 4px;
  line-height: 16px;
  border-right: 1px solid #9f9f9f;
}

.add-sheet {
  margin-left: 39px;
  margin-top: 5px;
}

.grip.h {
  width: 6px;
  margin-left: 691px;
  margin-right: 16px;
  padding-top: 7px;
}

.hscroll {
  display: flex;
  margin-top: 3px;
  height: 25px;
}

.hs-btn {
  box-sizing: border-box;
  width: 25px;
  height: 25px;
  background: #fff;
  border: 1px solid #b4b4b4;
  display: flex;
  align-items: center;
  justify-content: center;
}

.hs-thumb {
  width: 589px;
  box-sizing: border-box;
  background: #fff;
  border: 1px solid #a6a6a6;
}

.hs-track {
  width: 85px;
  background: #d6d6d6;
}

/* 状态栏 */
.status {
  height: 32px;
  flex: none;
  box-sizing: border-box;
  display: flex;
  align-items: center;
  justify-content: space-between;
  padding-left: 10px;
  background: #f3f3f3;
  border-top: 1px solid #c6c6c6;
}

.status-text {
  white-space: nowrap;
  color: #333;
  letter-spacing: 0.2px;
  margin-top: -2px;
}

.status-right {
  display: flex;
  align-items: center;
  height: 100%;
  padding-right: 10px;
}

.view {
  width: 60px;
  height: 100%;
  display: flex;
  align-items: center;
  justify-content: center;
}

.view.on {
  background: #c6c6c6;
}

.zoom-btn {
  position: relative;
  width: 20px;
  height: 100%;
  flex: none;
}

.zoom-btn.minus {
  margin-left: 3px;
  margin-right: 4px;
}

.zoom-btn.plus {
  margin-left: 3px;
  margin-right: 15px;
}

.zoom-btn::before {
  content: "";
  position: absolute;
  left: 4px;
  top: 15px;
  width: 12px;
  height: 1.500px;
  background: #444;
}

.zoom-btn.plus::after {
  content: "";
  position: absolute;
  left: 9.500px;
  top: 10px;
  width: 1.500px;
  height: 12px;
  background: #444;
}

.slider {
  position: relative;
  width: 148px;
  height: 2px;
  background: #a6a6a6;
}

.tick {
  position: absolute;
  left: 74px;
  top: -5px;
  width: 1px;
  height: 12px;
  background: #a6a6a6;
}

.thumb {
  position: absolute;
  left: 92px;
  top: -8px;
  width: 8px;
  height: 18px;
  background: #666;
}

.pct-text {
  color: #333;
  white-space: nowrap;
  font-size: 19.500px;
}

/* 水印 */
.watermark {
  position: absolute;
  left: 1472px;
  top: 812px;
  pointer-events: none;
}

.wm-paw {
  fill: rgba(255, 255, 255, 0.55);
  stroke: #dcdcdc;
  stroke-width: 2;
}

.wm-big,
.wm-du,
.wm-cn,
.wm-url {
  fill: rgba(255, 255, 255, 0.55);
  stroke: #d6d6d6;
  stroke-width: 1.500;
  font-family: "Liberation Sans", "Noto Sans CJK SC", sans-serif;
  font-weight: 700;
}

.wm-big {
  font-size: 80px;
}

.wm-du {
  font-size: 36px;
  font-weight: 400;
}

.wm-cn {
  font-size: 58px;
}

.wm-url {
  font-size: 42px;
  font-weight: 400;
}
</style>

<style>
html,
body {
  margin: 0;
  background: #e6e6e6;
}
</style>
